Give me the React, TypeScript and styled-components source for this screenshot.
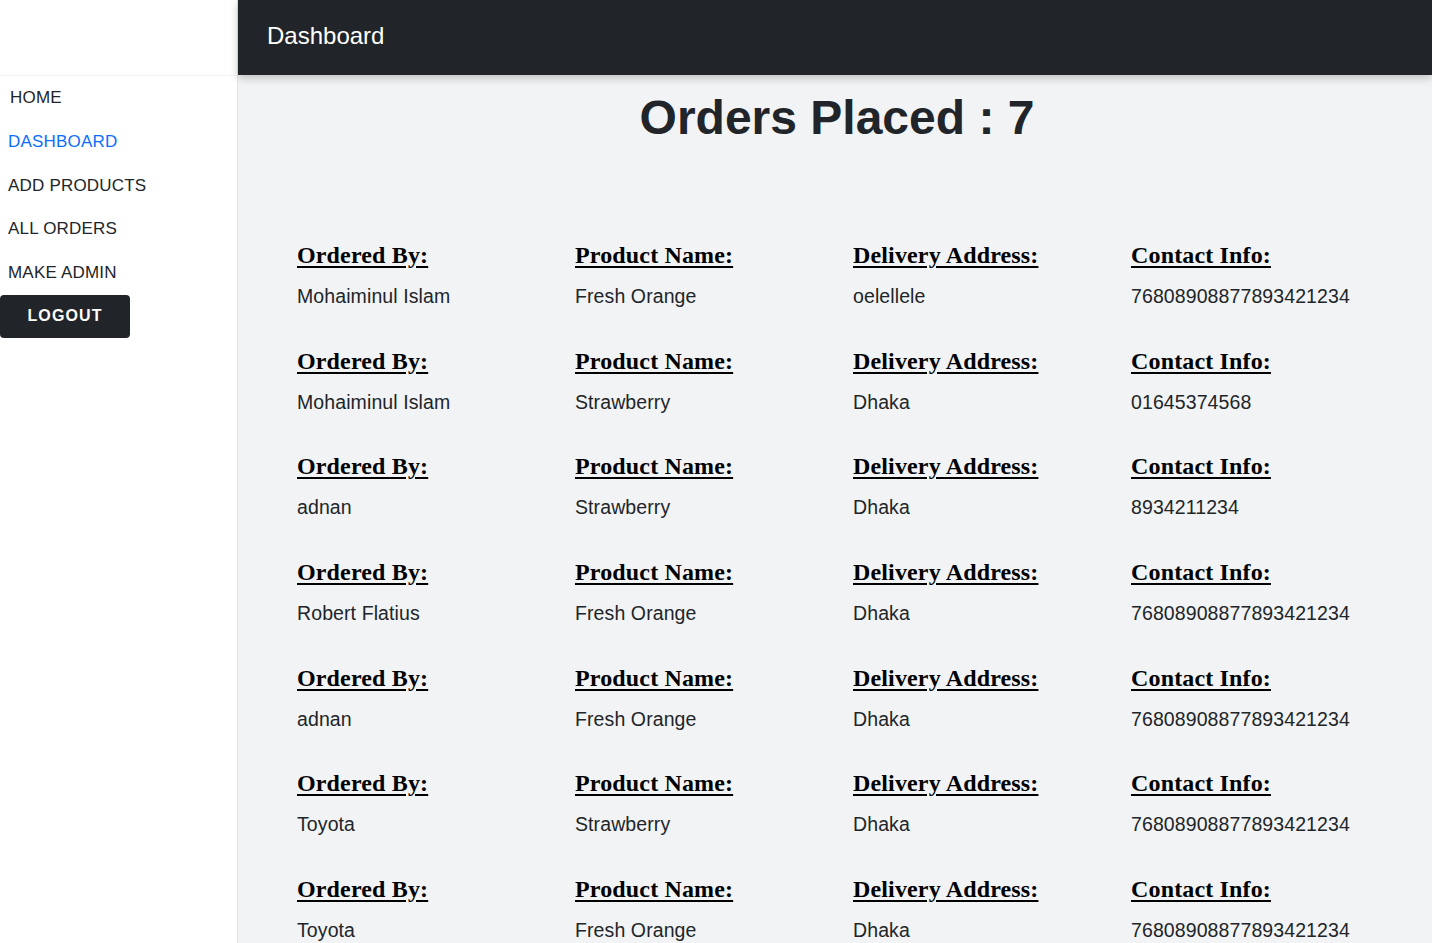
import React from "react";
import styled, { createGlobalStyle } from "styled-components";

const GlobalStyle = createGlobalStyle`
  * { box-sizing: border-box; }
  html, body { margin: 0; padding: 0; }
  body {
    font-family: "Liberation Sans", Arial, sans-serif;
    color: #212529;
    background: #f2f3f5;
  }
`;

const Page = styled.div`
  display: flex;
  min-height: 100vh;
`;

const Sidebar = styled.aside`
  width: 238px;
  flex-shrink: 0;
  background: #ffffff;
  border-right: 1px solid #e3e5e8;
  min-height: 100vh;
`;

const SideTop = styled.div`
  height: 76px;
  border-bottom: 1px solid #f0f1f3;
`;

const NavList = styled.nav`
  display: flex;
  flex-direction: column;
`;

const NavItem = styled.a<{ $active?: boolean; $indent?: number }>`
  display: block;
  height: 43.75px;
  line-height: 43.75px;
  padding-left: ${(p) => p.$indent ?? 8}px;
  font-size: 17px;
  letter-spacing: 0.2px;
  color: ${(p) => (p.$active ? "#0d6efd" : "#212529")};
  text-decoration: none;
  cursor: pointer;
`;

const LogoutButton = styled.button`
  margin-top: 0;
  width: 130px;
  height: 43px;
  border: none;
  border-radius: 4px;
  background: #212529;
  color: #ffffff;
  font-family: "Liberation Sans", Arial, sans-serif;
  font-weight: 700;
  font-size: 16px;
  letter-spacing: 1.1px;
  cursor: pointer;
`;

const Main = styled.main`
  flex: 1;
  display: flex;
  flex-direction: column;
  background: #f2f3f5;
`;

const TopBar = styled.header`
  height: 75px;
  background: #212529;
  display: flex;
  align-items: center;
  padding: 0 0 4px 29px;
  box-shadow: 0 3px 8px rgba(0, 0, 0, 0.22);
  position: relative;
  z-index: 1;
`;

const TopTitle = styled.span`
  color: #ffffff;
  font-size: 24px;
`;

const PageTitle = styled.h1`
  margin: 14px 0 0;
  text-align: center;
  font-size: 48px;
  line-height: 58px;
  font-weight: 700;
  color: #212529;
  padding-left: 4px;
`;

const OrdersGrid = styled.div`
  display: grid;
  grid-template-columns: repeat(4, 278px);
  row-gap: 37.67px;
  padding: 93px 0 40px 59px;
`;

const Cell = styled.div`
  display: flex;
  flex-direction: column;
`;

const Label = styled.h2`
  margin: 0;
  font-family: "Liberation Serif", "Times New Roman", serif;
  font-weight: 700;
  font-size: 24px;
  line-height: 30px;
  letter-spacing: 0.15px;
  color: #000000;
  text-decoration: underline;
  text-underline-offset: 3px;
`;

const Value = styled.p`
  margin: 14px 0 0;
  font-size: 19.5px;
  line-height: 24px;
  letter-spacing: 0.1px;
  color: #212529;
`;

type Order = { by: string; product: string; address: string; contact: string };

const orders: Order[] = [
  { by: "Mohaiminul Islam", product: "Fresh Orange", address: "oelellele", contact: "76808908877893421234" },
  { by: "Mohaiminul Islam", product: "Strawberry", address: "Dhaka", contact: "01645374568" },
  { by: "adnan", product: "Strawberry", address: "Dhaka", contact: "8934211234" },
  { by: "Robert Flatius", product: "Fresh Orange", address: "Dhaka", contact: "76808908877893421234" },
  { by: "adnan", product: "Fresh Orange", address: "Dhaka", contact: "76808908877893421234" },
  { by: "Toyota", product: "Strawberry", address: "Dhaka", contact: "76808908877893421234" },
  { by: "Toyota", product: "Fresh Orange", address: "Dhaka", contact: "76808908877893421234" },
];

export default function App() {
  return (
    <>
      <GlobalStyle />
      <Page>
        <Sidebar>
          <SideTop />
          <NavList>
            <NavItem $indent={10}>HOME</NavItem>
            <NavItem $active>DASHBOARD</NavItem>
            <NavItem>ADD PRODUCTS</NavItem>
            <NavItem>ALL ORDERS</NavItem>
            <NavItem>MAKE ADMIN</NavItem>
          </NavList>
          <LogoutButton>LOGOUT</LogoutButton>
        </Sidebar>
        <Main>
          <TopBar>
            <TopTitle>Dashboard</TopTitle>
          </TopBar>
          <PageTitle>Orders Placed : {orders.length}</PageTitle>
          <OrdersGrid>
            {orders.map((o, i) => (
              <React.Fragment key={i}>
                <Cell>
                  <Label>Ordered By:</Label>
                  <Value>{o.by}</Value>
                </Cell>
                <Cell>
                  <Label>Product Name:</Label>
                  <Value>{o.product}</Value>
                </Cell>
                <Cell>
                  <Label>Delivery Address:</Label>
                  <Value>{o.address}</Value>
                </Cell>
                <Cell>
                  <Label>Contact Info:</Label>
                  <Value>{o.contact}</Value>
                </Cell>
              </React.Fragment>
            ))}
          </OrdersGrid>
        </Main>
      </Page>
    </>
  );
}
